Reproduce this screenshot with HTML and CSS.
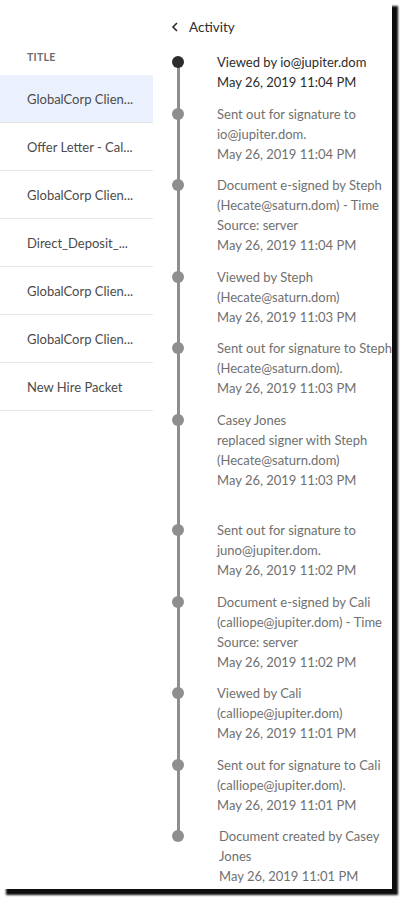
FILE: index.html
```html
<!DOCTYPE html>
<html>
<head>
<meta charset="utf-8">
<link rel="stylesheet" href="styles.css">
</head>
<body>
<div class="panel">
  <div class="docs">
    <div class="docs-head">TITLE</div>
    <div class="doc-row selected">GlobalCorp Clien...</div>
    <div class="doc-row">Offer Letter - Cal...</div>
    <div class="doc-row">GlobalCorp Clien...</div>
    <div class="doc-row">Direct_Deposit_...</div>
    <div class="doc-row">GlobalCorp Clien...</div>
    <div class="doc-row">GlobalCorp Clien...</div>
    <div class="doc-row">New Hire Packet</div>
  </div>
  <div class="activity">
    <div class="act-head">
      <svg class="chev" width="8" height="10" viewBox="0 0 8 10"><path d="M6 1 L2 5 L6 9" fill="none" stroke="#2c2c2c" stroke-width="1.6"/></svg>
      <span>Activity</span>
    </div>
    <ul class="timeline">
      <li class="ev current"><span class="dot"></span><div class="txt">Viewed by io@jupiter.dom<br>May 26, 2019 11:04 PM</div></li>
      <li class="ev"><span class="dot"></span><div class="txt">Sent out for signature to<br>io@jupiter.dom.<br>May 26, 2019 11:04 PM</div></li>
      <li class="ev"><span class="dot"></span><div class="txt">Document e-signed by Steph<br>(Hecate@saturn.dom) - Time<br>Source: server<br>May 26, 2019 11:04 PM</div></li>
      <li class="ev"><span class="dot"></span><div class="txt">Viewed by Steph<br>(Hecate@saturn.dom)<br>May 26, 2019 11:03 PM</div></li>
      <li class="ev"><span class="dot"></span><div class="txt">Sent out for signature to Steph<br>(Hecate@saturn.dom).<br>May 26, 2019 11:03 PM</div></li>
      <li class="ev extra"><span class="dot"></span><div class="txt">Casey Jones<br>replaced signer with Steph<br>(Hecate@saturn.dom)<br>May 26, 2019 11:03 PM</div></li>
      <li class="ev"><span class="dot"></span><div class="txt">Sent out for signature to<br>juno@jupiter.dom.<br>May 26, 2019 11:02 PM</div></li>
      <li class="ev"><span class="dot"></span><div class="txt">Document e-signed by Cali<br>(calliope@jupiter.dom) - Time<br>Source: server<br>May 26, 2019 11:02 PM</div></li>
      <li class="ev"><span class="dot"></span><div class="txt">Viewed by Cali<br>(calliope@jupiter.dom)<br>May 26, 2019 11:01 PM</div></li>
      <li class="ev"><span class="dot"></span><div class="txt">Sent out for signature to Cali<br>(calliope@jupiter.dom).<br>May 26, 2019 11:01 PM</div></li>
      <li class="ev last"><span class="dot"></span><div class="txt shifted">Document created by Casey<br>Jones<br>May 26, 2019 11:01 PM</div></li>
    </ul>
  </div>
</div>
</body>
</html>
```
FILE: styles.css
```css
html, body {
  margin: 0;
  padding: 0;
  background: #ffffff;
}
body {
  font-family: Lato, "Liberation Sans", sans-serif;
  width: 400px;
  height: 901px;
  overflow: hidden;
}
.panel {
  width: 392px;
  height: 889px;
  background: #ffffff;
  box-shadow: 6px 6px 2px rgba(0, 0, 0, 0.95);
  display: flex;
  overflow: hidden;
}
.docs {
  width: 153px;
  flex: none;
}
.docs-head {
  height: 75px;
  box-sizing: border-box;
  padding: 49px 0 0 27px;
  font-size: 10.5px;
  line-height: 16px;
  font-weight: 700;
  letter-spacing: 0.3px;
  color: #6e6e6e;
}
.doc-row {
  height: 48px;
  box-sizing: border-box;
  border-bottom: 1px solid #e6e6e6;
  padding-left: 27px;
  display: flex;
  align-items: center;
  font-size: 13px;
  color: #4b4b4b;
}
.doc-row.selected {
  background: #ebf1fc;
}
.activity {
  flex: 1;
  padding-top: 17px;
}
.act-head {
  height: 20px;
  display: flex;
  align-items: center;
  padding-left: 18px;
  font-size: 13.5px;
  color: #2c2c2c;
}
.chev {
  margin-right: 10px;
}
.timeline {
  list-style: none;
  margin: 15px 0 0 0;
  padding: 0 0 0 13px;
}
.ev {
  position: relative;
  display: flex;
  padding-bottom: 11.6px;
}
.ev.extra {
  padding-bottom: 30px;
}
.ev::before {
  content: "";
  position: absolute;
  left: 10.5px;
  width: 3px;
  top: 10px;
  bottom: -10px;
  background: #8e8e8e;
}
.ev.last::before {
  display: none;
}
.dot {
  width: 12px;
  height: 12px;
  border-radius: 50%;
  background: #8e8e8e;
  margin: 4px 6px 0 6px;
  flex: none;
  position: relative;
  z-index: 1;
}
.ev.current .dot {
  background: #2c2c2c;
}
.txt {
  margin-left: 27px;
  font-size: 13px;
  line-height: 20px;
  color: #707070;
  white-space: nowrap;
}
.ev.current .txt {
  color: #2c2c2c;
}
.txt.shifted {
  margin-left: 29px;
}
```
